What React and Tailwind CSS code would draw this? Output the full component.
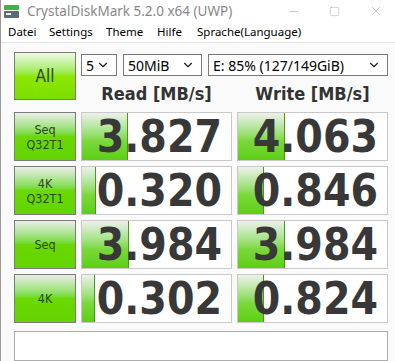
import { ChevronDown, Minus, Square, X } from 'lucide-react';

const ROWS = [
  { label: ['Seq', 'Q32T1'], read: '3.827', write: '4.063', rw: 46, ww: 47 },
  { label: ['4K', 'Q32T1'], read: '0.320', write: '0.846', rw: 14, ww: 26 },
  { label: ['Seq'], read: '3.984', write: '3.984', rw: 47, ww: 47 },
  { label: ['4K'], read: '0.302', write: '0.824', rw: 13, ww: 26 },
];

const MENU = [
  { label: 'Datei', w: 'w-[41px]' },
  { label: 'Settings', w: 'w-[57px]' },
  { label: 'Theme', w: 'w-[51px]' },
  { label: 'Hilfe', w: 'w-[40px]' },
  { label: 'Sprache(Language)', w: '' },
];

const ui = "font-['Segoe_UI','Noto_Sans',sans-serif]";
const num = "font-['DejaVu_Sans_Condensed','DejaVu_Sans',sans-serif] font-stretch-condensed";

function AppIcon() {
  return (
    <svg width="15" height="15" viewBox="0 0 15 15">
      <rect x="0" y="1" width="15" height="5" rx="1" fill="#39b54a" />
      <rect x="0" y="7" width="15" height="7" rx="1" fill="#5b6b73" />
      <rect x="2" y="9" width="5" height="2" fill="#e8f0f0" />
    </svg>
  );
}

function Select({ value, w }) {
  return (
    <div className={`flex items-center justify-between h-[22px] border border-[#7a7a7a] bg-white pl-1 pr-1.5 text-[14px] text-black ${ui} ${w}`}>
      <span>{value}</span>
      <ChevronDown size={14} strokeWidth={2} className="text-[#222]" />
    </div>
  );
}

function TestButton({ lines, big }) {
  return (
    <button className={`flex flex-col items-center justify-center border border-[#7b7b7b] text-[#2e4519] leading-[15px] ${num} ${big ? "w-[62px] h-[48px] text-[17px] bg-gradient-to-b from-[#eef8e4] via-[#8ee800] via-50% to-[#7ade00]" : "w-[62px] h-[49px] text-[12.5px] bg-gradient-to-b from-[#ebede8] via-[#6ad900] via-50% to-[#62d400]"}`}>
      {lines.map(l => <span key={l}>{l}</span>)}
    </button>
  );
}

function Cell({ value, bar }) {
  return (
    <div className="relative w-[151px] h-[49px] border border-[#c9c9c9] bg-white overflow-hidden">
      <div className="absolute left-0 top-0 bottom-0 border-r border-[#3f9f10] bg-gradient-to-b from-[#eef0ec] via-[#7ad83a] via-60% to-[#5ccf10]" style={{ width: bar }} />
      <div className={`relative flex items-center justify-end h-full pr-[9px] text-[44px] font-bold text-[#383838] ${num}`}>
        {value}
      </div>
    </div>
  );
}

export default function App() {
  return (
    <div className="w-[395px] h-[361px] bg-[#fafafa] border-l border-[#9a9a9a] overflow-hidden">
      {/* Title bar */}
      <div className="flex items-center h-[22px] bg-white">
        <div className="pl-[3px] pr-2"><AppIcon /></div>
        <span className={`text-[13.5px] text-[#888] ${ui}`}>CrystalDiskMark 5.2.0 x64 (UWP)</span>
        <div className="ml-auto flex items-center gap-[29px] pr-[12px] text-[#999]">
          <Minus size={13} strokeWidth={1} />
          <Square size={11} strokeWidth={1} />
          <X size={14} strokeWidth={1} />
        </div>
      </div>

      {/* Menu */}
      <div className={`flex items-center h-[21px] pl-[7px] bg-white border-b border-[#e4e4e4] text-[11.5px] text-black ${ui}`}>
        {MENU.map(m => <span key={m.label} className={m.w}>{m.label}</span>)}
      </div>

      <div className="pl-[13px] pt-[9px]">
        {/* Header */}
        <div className="flex gap-[5px]">
          <TestButton lines={['All']} big />
          <div className="flex flex-col">
            <div className="flex gap-[6px] mt-[2px]">
              <Select value="5" w="w-[36px]" />
              <Select value="50MiB" w="w-[79px]" />
              <Select value="E: 85% (127/149GiB)" w="w-[180px]" />
            </div>
            <div className={`flex gap-[5px] mt-[4px] text-[18px] font-bold text-[#333] ${num}`}>
              <div className="w-[151px] text-center">Read [MB/s]</div>
              <div className="w-[151px] text-center">Write [MB/s]</div>
            </div>
          </div>
        </div>

        {/* Results */}
        <div className="flex flex-col gap-[5px] mt-[5px]">
          {ROWS.map(r => (
            <div key={r.read + r.write + r.label.join()} className="flex gap-[5px]">
              <TestButton lines={r.label} />
              <Cell value={r.read} bar={r.rw} />
              <Cell value={r.write} bar={r.ww} />
            </div>
          ))}
        </div>

        {/* Comment box */}
        <div className="mt-[8px] w-[374px] h-[30px] border border-[#adadad] bg-white" />
      </div>
    </div>
  );
}
